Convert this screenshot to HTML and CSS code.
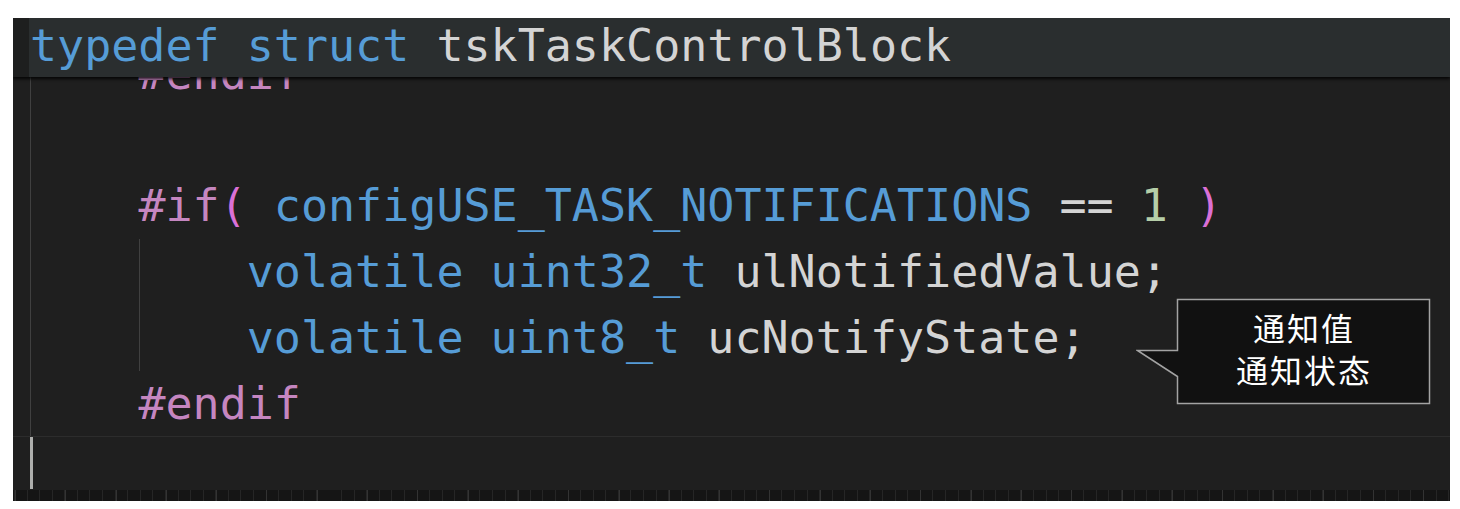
FILE: index.html
```html
<!DOCTYPE html>
<html lang="zh-CN">
<head>
<meta charset="utf-8">
<title>tskTaskControlBlock</title>
<link rel="stylesheet" href="styles.css">
</head>
<body>
<div class="editor">
  <div class="code">
    <div class="block">
      <div class="line">    <span class="pp">#endif</span></div>
      <div class="line"> </div>
      <div class="line">    <span class="pp">#if</span><span class="br">(</span> <span class="kw">configUSE_TASK_NOTIFICATIONS</span> == <span class="num">1</span> <span class="br">)</span></div>
      <div class="inner">
        <div class="line">        <span class="kw">volatile</span> <span class="kw">uint32_t</span> ulNotifiedValue;</div>
        <div class="line">        <span class="kw">volatile</span> <span class="kw">uint8_t</span> ucNotifyState;</div>
      </div>
      <div class="line">    <span class="pp">#endif</span></div>
    </div>
    <div class="line current"><span class="cursor"></span></div>
  </div>
  <div class="sticky">
    <div class="sticky-gutter"></div>
    <div class="sticky-line"><span class="kw">typedef</span> <span class="kw">struct</span> tskTaskControlBlock</div>
  </div>
  <div class="ruler"></div>
  <div class="callout">
    <svg class="bubble" width="296" height="108" viewBox="0 0 296 108">
      <path d="M41.5 1.5 H293.5 V105.5 H41.5 V78.5 L1.5 52.5 H41.5 Z" fill="#111111" stroke="#a3a3a3" stroke-width="1.5"/>
    </svg>
    <div class="callout-text">
      <span>通知值</span>
      <span>通知状态</span>
    </div>
  </div>
</div>
</body>
</html>
```

FILE: styles.css
```css
html, body {
  margin: 0;
  padding: 0;
  background: #ffffff;
}

.editor {
  position: relative;
  margin: 18px 0 0 13px;
  width: 1437px;
  height: 483px;
  background: #1f1f1f;
  overflow: hidden;
  font-family: "DejaVu Sans Mono", "Liberation Mono", monospace;
  font-size: 45px;
  color: #d4d4d4;
}

.code {
  padding-top: 23px;
  padding-left: 17px;
}

.line {
  height: 66px;
  line-height: 66px;
  white-space: pre;
}

.block {
  background: linear-gradient(#404040, #404040) no-repeat 0 0 / 1px 100%;
}

.inner {
  background: linear-gradient(#404040, #404040) no-repeat calc(4ch + 1px) 0 / 1px 100%;
}

.current {
  border-top: 1px solid #2c2c2c;
  margin-top: -1px;
  margin-left: -17px;
  padding-left: 17px;
}

.cursor {
  display: block;
  width: 3px;
  height: 52px;
  background: #aeafad;
}

.kw { color: #569cd6; }
.pp { color: #c586c0; }
.br { color: #da70d6; }
.num { color: #b5cea8; }

.sticky {
  position: absolute;
  left: 0;
  top: 0;
  right: 0;
  height: 59px;
  display: flex;
  box-shadow: 0 2px 3px rgba(0, 0, 0, 0.85);
}

.sticky-gutter {
  width: 16px;
  background: #1e1f1f;
}

.sticky-line {
  flex: 1;
  background: #2a2e2f;
  padding-left: 1px;
  line-height: 56px;
  white-space: pre;
}

.ruler {
  position: absolute;
  left: 0;
  right: 0;
  bottom: 0;
  height: 11px;
  background:
    repeating-linear-gradient(to right, transparent 0 2px, #333 2px 3px, transparent 3px 50.3px),
    repeating-linear-gradient(to right, transparent 0 1px, #262626 1px 2px, transparent 2px 12.58px),
    #151515;
}

.callout {
  position: absolute;
  left: 1123px;
  top: 280px;
  width: 296px;
  height: 108px;
}

.bubble {
  position: absolute;
  left: 0;
  top: 0;
}

.callout-text {
  position: relative;
  margin-left: 42px;
  width: 252px;
  height: 100px;
  display: flex;
  flex-direction: column;
  align-items: center;
  justify-content: center;
  gap: 0;
  font-family: "Noto Sans CJK SC", "Noto Sans", sans-serif;
  font-size: 32px;
  line-height: 42px;
  color: #ffffff;
  letter-spacing: 2px;
}
```
